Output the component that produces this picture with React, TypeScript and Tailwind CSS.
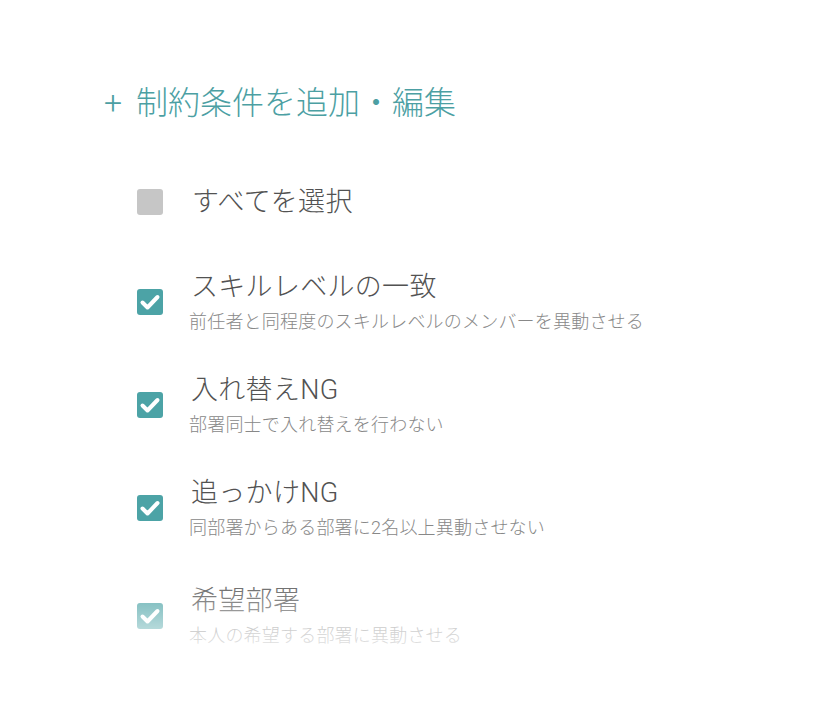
import React from "react";

const font = { fontFamily: 'Roboto, "Noto Sans CJK JP", "Noto Sans", sans-serif' };

function Check({ on }: { on: boolean }) {
  if (!on) return <div className="w-[26px] h-[26px] rounded-[3px] bg-[#c6c6c6] shrink-0" />;
  return (
    <div className="w-[26px] h-[26px] rounded-[3px] bg-[#4ca3a6] shrink-0 flex items-center justify-center">
      <svg width="26" height="26" viewBox="0 0 26 26">
        <path d="M5.5 13.5 L10.5 18.5 L20.5 8" fill="none" stroke="white" strokeWidth="4" strokeLinecap="round" strokeLinejoin="round" />
      </svg>
    </div>
  );
}

const items = [
  { t: "スキルレベルの一致", d: "前任者と同程度のスキルレベルのメンバーを異動させる", extra: false },
  { t: "入れ替えNG", d: "部署同士で入れ替えを行わない", extra: false },
  { t: "追っかけNG", d: "同部署からある部署に2名以上異動させない", extra: false },
  { t: "希望部署", d: "本人の希望する部署に異動させる", extra: true },
];

export default function App() {
  return (
    <div className="relative w-[828px] h-[720px] bg-white overflow-hidden font-light" style={font}>
      <div className="pt-[79px] pl-[104px]">
        <div className="flex items-center h-[48px] text-[32px] text-[#4c9fa3] leading-none">
          <span className="w-[32px] text-[32px]">+</span>
          <span>制約条件を追加・編集</span>
        </div>
      </div>
      <div className="pl-[137px] mt-[55px] flex flex-col">
        <div className="flex items-center h-[40px] gap-[29px]">
          <Check on={false} />
          <span className="text-[27px] text-[#525252] leading-[40px] tracking-[0.4px]">すべてを選択</span>
        </div>
        <div className="mt-[45px] flex flex-col gap-[33px]">
          {items.map((it) => (
            <div key={it.t} className={"flex items-center gap-[28px] h-[70px] " + (it.extra ? "mt-[5px]" : "")}>
              <Check on={true} />
              <div className="flex flex-col">
                <span className="text-[27px] text-[#525252] leading-[40px] h-[40px] tracking-[0.3px]">{it.t}</span>
                <span className="text-[18px] text-[#888888] leading-[30px] h-[30px] -ml-[2px] tracking-[0.2px]">{it.d}</span>
              </div>
            </div>
          ))}
        </div>
      </div>
      <div className="absolute left-0 right-0 top-[570px] h-[100px] bg-gradient-to-b from-white/0 to-white pointer-events-none" />
      <div className="absolute left-0 right-0 top-[670px] bottom-0 bg-white pointer-events-none" />
    </div>
  );
}
